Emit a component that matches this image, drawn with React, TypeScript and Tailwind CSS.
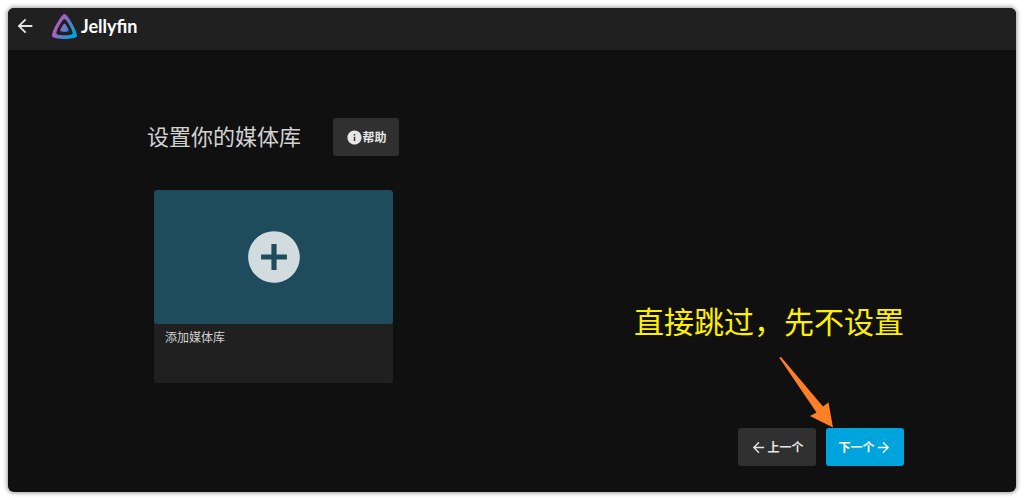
import type { ReactNode } from "react";
import { MdAddCircle, MdArrowBack, MdArrowForward, MdInfo } from "react-icons/md";
import clsx from "clsx";

function JellyfinLogo() {
    return (
        <a href="#home" className="flex items-center gap-1">
            <svg viewBox="0 0 24 24" className="size-[25px]" aria-hidden="true">
                <defs>
                    <linearGradient id="jellyfin" gradientUnits="userSpaceOnUse" x1="5.9" y1="10.3" x2="21.5" y2="19.3">
                        <stop offset="0" stopColor="#aa5cc3" />
                        <stop offset="1" stopColor="#00a4dc" />
                    </linearGradient>
                </defs>
                <path
                    fill="url(#jellyfin)"
                    d="M12 .002C8.826.002-1.398 18.537.16 21.666c1.56 3.129 22.14 3.094 23.682 0C25.384 18.573 15.177 0 12 0zm7.76 18.949c-1.008 2.028-14.493 2.05-15.514 0C3.224 16.9 9.92 4.755 12.003 4.755c2.081 0 8.77 12.166 7.759 14.196zM12 9.198c-1.054 0-4.446 6.15-3.93 7.189.518 1.04 7.348 1.027 7.86 0 .511-1.027-2.874-7.19-3.93-7.19z"
                />
            </svg>
            <span className="font-[Lato,'Liberation_Sans',sans-serif] text-lg leading-6 font-bold text-white">Jellyfin</span>
        </a>
    );
}

function Button({ primary, className, children }: { primary?: boolean; className?: string; children: ReactNode }) {
    return (
        <button
            type="button"
            className={clsx(
                "flex h-[38px] items-center justify-center rounded-[3px] text-xs font-bold",
                primary ? "bg-[#00a4dc] text-white" : "bg-[#303030] text-[#e6e6e6]",
                className
            )}
        >
            {children}
        </button>
    );
}

export default function App() {
    return (
        <div className="flex min-h-screen bg-white p-2 font-['Noto_Sans_CJK_SC',sans-serif]">
            <div className="flex flex-1 flex-col overflow-hidden rounded-md bg-[#101010] shadow-[0_0_4px_1px_rgba(0,0,0,0.4)]">
                {/* Header */}
                <header className="flex h-[42px] items-center gap-4 bg-[#202020] px-1.5 pb-1.5">
                    <button type="button" aria-label="返回" className="text-[#e6e6e6]">
                        <MdArrowBack className="size-[22px]" />
                    </button>
                    <JellyfinLogo />
                </header>

                <main className="flex flex-1 flex-col pt-[68px] pr-28 pb-[26px] pl-[139px]">
                    <div className="flex items-start gap-8">
                        <h1 className="text-[22px] leading-[34px] text-[#d2d2d2]">设置你的媒体库</h1>
                        <Button className="w-[66px]">
                            <MdInfo className="size-[17px]" />
                            帮助
                        </Button>
                    </div>

                    {/* Library card */}
                    <button
                        type="button"
                        className="mt-[34px] ml-[7px] flex w-[239px] flex-col overflow-hidden rounded-[3px] bg-[#202020] text-left"
                    >
                        <span className="flex h-[134px] w-full items-center justify-center rounded-[3px] bg-[#1e4c5c]">
                            <MdAddCircle className="size-[62px] text-[#d2dbde]" />
                        </span>
                        <span className="h-[59px] px-[11px] pt-1 text-xs leading-[18px] text-[#d2d2d2]">添加媒体库</span>
                    </button>

                    <div className="relative mt-auto flex justify-end gap-2.5">
                        {/* Callout pointing at the next button */}
                        <div className="absolute right-0 bottom-full">
                            <p className="text-3xl leading-8 whitespace-nowrap text-[#fff000]">直接跳过，先不设置</p>
                            <svg viewBox="0 0 56 72" className="mt-5 mr-[70px] ml-auto h-[72px] w-14" aria-hidden="true">
                                <path fill="#ff7f27" d="M1.5 1.5L3 1L45 50.5L50.5 46.5L55 71.5L32 60L38.5 56.5L1.5 2Z" />
                            </svg>
                        </div>
                        <Button className="w-[78px]">
                            <MdArrowBack className="size-[17px]" />
                            上一个
                        </Button>
                        <Button primary className="w-[78px]">
                            下一个
                            <MdArrowForward className="size-[17px]" />
                        </Button>
                    </div>
                </main>
            </div>
        </div>
    );
}
